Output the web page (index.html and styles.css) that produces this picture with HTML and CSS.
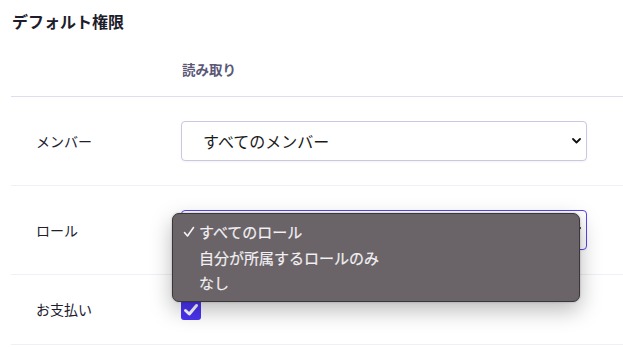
FILE: index.html
```
<!DOCTYPE html>
<html lang="ja">
<head>
<meta charset="utf-8">
<link rel="stylesheet" href="styles.css">
</head>
<body>
<div class="page">
  <h2 class="title">デフォルト権限</h2>
  <div class="table">
    <div class="row head">
      <div class="label"></div>
      <div class="cell colhead">読み取り</div>
    </div>
    <div class="row">
      <div class="label">メンバー</div>
      <div class="cell">
        <div class="select">
          <span class="select-text">すべてのメンバー</span>
          <svg class="chev" width="9" height="6" viewBox="0 0 9 6"><path d="M1 1 L4.5 4.5 L8 1" fill="none" stroke="#111" stroke-width="1.8" stroke-linecap="round" stroke-linejoin="round"/></svg>
        </div>
      </div>
    </div>
    <div class="row">
      <div class="label">ロール</div>
      <div class="cell">
        <div class="select-wrap">
          <div class="select focus">
            <span class="select-text"></span>
            <svg class="chev" width="9" height="6" viewBox="0 0 9 6"><path d="M1 1 L4.5 4.5 L8 1" fill="none" stroke="#111" stroke-width="1.8" stroke-linecap="round" stroke-linejoin="round"/></svg>
          </div>
          <div class="menu">
            <div class="item">
              <svg class="tick" width="12" height="12" viewBox="0 0 12 12"><path d="M1.5 6.5 L4.5 10 L10.5 1.5" fill="none" stroke="#f4f2f4" stroke-width="1.6" stroke-linecap="round" stroke-linejoin="round"/></svg>すべてのロール</div>
            <div class="item">自分が所属するロールのみ</div>
            <div class="item">なし</div>
          </div>
        </div>
      </div>
    </div>
    <div class="row short">
      <div class="label">お支払い</div>
      <div class="cell">
        <span class="checkbox">
          <svg width="20" height="20" viewBox="0 0 20 20"><path d="M4.5 10.5 L8.3 14 L15.5 5.5" fill="none" stroke="#fff" stroke-width="3" stroke-linecap="round" stroke-linejoin="round"/></svg>
        </span>
      </div>
    </div>
  </div>
</div>
</body>
</html>
```
FILE: styles.css
```
* { box-sizing: border-box; }
html, body { margin: 0; padding: 0; background: #fff; }
body {
  font-family: "Noto Sans CJK JP", "Noto Sans", sans-serif;
  color: #1f1d2c;
  overflow: hidden;
}
.page {
  padding: 9px 0 0 11px;
}
.title {
  margin: 0;
  font-size: 16px;
  line-height: 24px;
  font-weight: 700;
  color: #1e1d2b;
  padding-left: 1px;
}
.table {
  width: 640px;
}
.row {
  display: flex;
  align-items: center;
  padding: 24px 0;
  border-bottom: 1px solid #f0eff6;
}
.row.head {
  padding: 26px 0 16px;
  border-bottom-color: #e0ddee;
}
.label {
  width: 170px;
  flex: none;
  padding-left: 25px;
  font-size: 14px;
  line-height: 21px;
  color: #22202f;
}
.cell {
  flex: 1;
}
.colhead {
  font-size: 13.5px;
  font-weight: 700;
  line-height: 21px;
  color: #5b5877;
  padding-left: 1px;
}
.select-wrap {
  position: relative;
  width: 406px;
}
.select {
  width: 406px;
  height: 40px;
  border: 1px solid #cbc7e2;
  border-radius: 4px;
  display: flex;
  align-items: center;
  padding-left: 21px;
  padding-right: 5px;
  background: #fff;
  box-shadow: 0 1px 2px rgba(60, 50, 120, 0.06);
}
.select.focus {
  border: 1.5px solid #5546f2;
}
.select-text {
  flex: 1;
  font-size: 16px;
  color: #1a1a1a;
}
.chev { flex: none; }
.menu {
  position: absolute;
  left: -9px;
  top: 3px;
  width: 408px;
  background: #6a6468;
  border: 1px solid #3b3639;
  border-radius: 7px;
  padding: 5px 0;
  box-shadow: 0 8px 22px rgba(0, 0, 0, 0.28), 0 0 2px rgba(0, 0, 0, 0.3);
}
.item {
  position: relative;
  height: 25.5px;
  line-height: 25.5px;
  padding-left: 26px;
  font-size: 15px;
  color: #f2f0f2;
  -webkit-text-stroke: 0.2px #f2f0f2;
}
.tick {
  position: absolute;
  left: 10px;
  top: 7px;
}
.checkbox {
  display: block;
  width: 20px;
  height: 20px;
  margin-top: 1px;
  background: #4b33f3;
  border-radius: 3px;
}
.checkbox svg { display: block; }
```
